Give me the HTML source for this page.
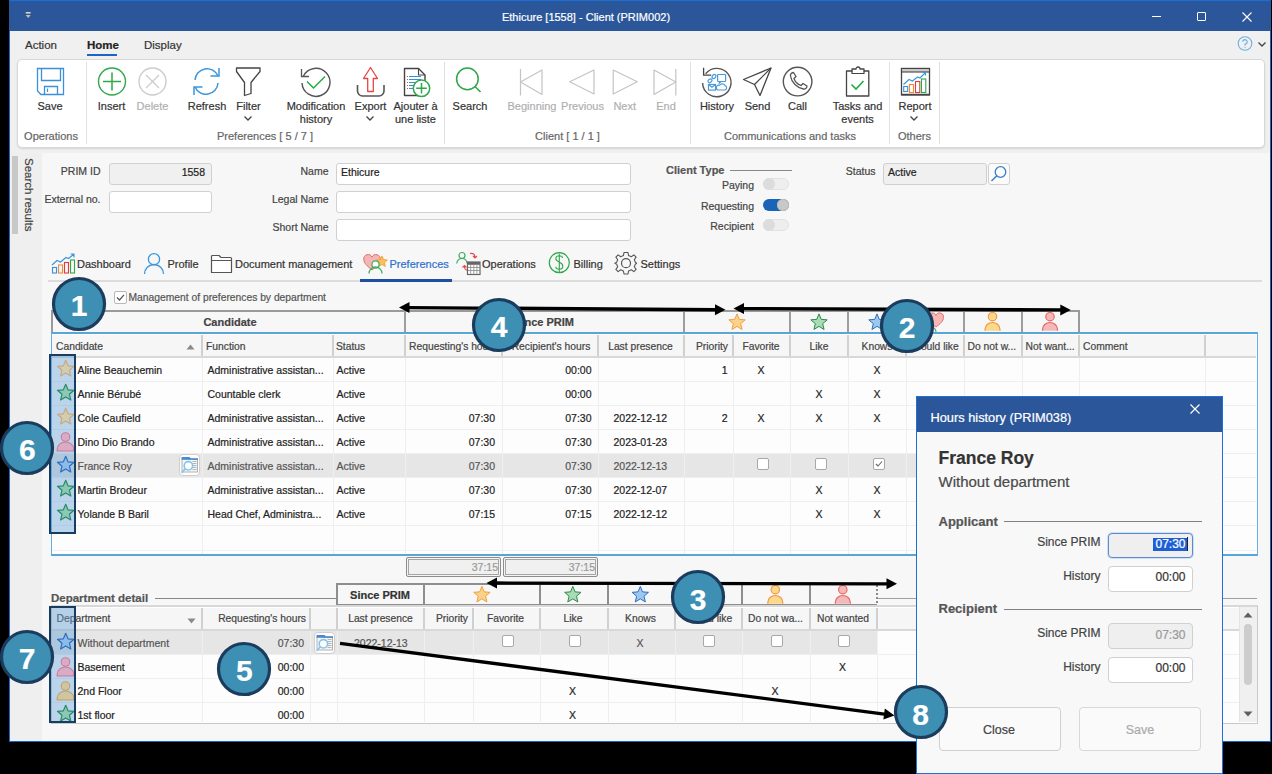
<!DOCTYPE html>
<html><head><meta charset="utf-8"><style>
html,body{margin:0;padding:0;}
body{width:1272px;height:774px;position:relative;overflow:hidden;background:#000;font-family:"Liberation Sans",sans-serif;}
.t{position:absolute;white-space:nowrap;-webkit-text-stroke:0.2px currentColor;}
svg{overflow:visible}
</style></head><body>
<div style="position:absolute;left:9px;top:0px;width:1262px;height:742px;background:#f7f7f7;border-left:1px solid #1e64c8;border-right:1px solid #1e64c8;border-bottom:1px solid #1e64c8;box-sizing:border-box;"></div>
<div style="position:absolute;left:9px;top:0px;width:1262px;height:31px;background:#2b579a;border-top:1px solid #1a6fd6;box-sizing:border-box;"></div>
<div class="t " style="left:436.0px;width:300px;text-align:center;top:10.0px;font-size:11px;line-height:14px;color:#fff;font-weight:normal;">Ethicure [1558] - Client (PRIM002)</div>
<div style="position:absolute;left:10px;top:31px;width:1260px;height:122px;background:#f0f0f0;"></div>
<div class="t " style="left:25px;top:38.0px;font-size:11.5px;line-height:14px;color:#333;font-weight:normal;">Action</div>
<div class="t " style="left:87px;top:38.0px;font-size:11.5px;line-height:14px;color:#222;font-weight:bold;">Home</div>
<div style="position:absolute;left:87px;top:54px;width:30px;height:2px;background:#1e64c8;"></div>
<div class="t " style="left:144px;top:38.0px;font-size:11.5px;line-height:14px;color:#333;font-weight:normal;">Display</div>
<div style="position:absolute;left:17px;top:59px;width:1248px;height:89px;background:#fff;border:1px solid #d8d8d8;border-radius:5px;box-sizing:border-box;box-shadow:0 1px 2px rgba(0,0,0,0.12);"></div>
<div style="position:absolute;left:10px;top:153px;width:1260px;height:588px;background:#f7f7f7;"></div>
<div style="position:absolute;left:10px;top:153px;width:32px;height:588px;background:#efefef;"></div>
<div style="position:absolute;left:12px;top:156px;width:6px;height:78px;background:#c8c8c8;"></div>
<div class="t" style="left:21.5px;top:158px;width:16px;height:80px;"><div style="position:absolute;left:0;top:0;transform-origin:0 0;transform:translate(15px,0) rotate(90deg);font-size:11.5px;line-height:16px;color:#444;">Search results</div></div>
<div style="position:absolute;left:86px;top:62px;width:1px;height:82px;background:#e0e0e0;"></div>
<div style="position:absolute;left:444px;top:62px;width:1px;height:82px;background:#e0e0e0;"></div>
<div style="position:absolute;left:690px;top:62px;width:1px;height:82px;background:#e0e0e0;"></div>
<div style="position:absolute;left:889px;top:62px;width:1px;height:82px;background:#e0e0e0;"></div>
<div style="position:absolute;left:939px;top:62px;width:1px;height:82px;background:#e0e0e0;"></div>
<svg style="position:absolute;left:37px;top:68px;" width="28" height="28" viewBox="0 0 28 28"><path d="M0.5 0.5 H26.5 V26.5 H4 L0.5 23 Z" fill="none" stroke="#3d8fd6" stroke-width="1.3"/><path d="M4.5 0.5 V12.5 H23.5 V0.5" fill="none" stroke="#3d8fd6" stroke-width="1.3"/><path d="M7.5 26.5 V18.5 H20.5 V26.5" fill="none" stroke="#3d8fd6" stroke-width="1.3"/><path d="M10.5 20.5 V24" stroke="#3d8fd6" stroke-width="1.2"/></svg>
<div class="t " style="left:5.0px;width:90px;text-align:center;top:99.3px;font-size:11px;line-height:14px;color:#333;font-weight:normal;">Save</div>
<div class="t " style="left:6.0px;width:90px;text-align:center;top:129.0px;font-size:11px;line-height:14px;color:#666;font-weight:normal;">Operations</div>
<svg style="position:absolute;left:97px;top:67px;" width="30" height="30" viewBox="0 0 30 30"><circle cx="15" cy="14.5" r="13.5" fill="none" stroke="#2ea84a" stroke-width="1.4"/><path d="M15 5.5 V23.5 M6 14.5 H24" stroke="#2ea84a" stroke-width="1.5"/></svg>
<div class="t " style="left:66.5px;width:90px;text-align:center;top:99.3px;font-size:11px;line-height:14px;color:#333;font-weight:normal;">Insert</div>
<svg style="position:absolute;left:138px;top:67px;" width="30" height="30" viewBox="0 0 30 30"><circle cx="14.5" cy="14.5" r="13.5" fill="none" stroke="#cccccc" stroke-width="1.4"/><path d="M8 8 L21 21 M21 8 L8 21" stroke="#cccccc" stroke-width="1.3"/></svg>
<div class="t " style="left:107.5px;width:90px;text-align:center;top:99.3px;font-size:11px;line-height:14px;color:#b0b0b0;font-weight:normal;">Delete</div>
<svg style="position:absolute;left:192px;top:67px;" width="30" height="30" viewBox="0 0 30 30"><path d="M3 13 A12 12 0 0 1 26 9" fill="none" stroke="#3a96dd" stroke-width="1.5"/><path d="M27 1 V9 H18.5" fill="none" stroke="#3a96dd" stroke-width="1.5"/><path d="M26 16 A12 12 0 0 1 3 20" fill="none" stroke="#3a96dd" stroke-width="1.5"/><path d="M2 28 V20 H10.5" fill="none" stroke="#3a96dd" stroke-width="1.5"/></svg>
<div class="t " style="left:162.0px;width:90px;text-align:center;top:99.3px;font-size:11px;line-height:14px;color:#333;font-weight:normal;">Refresh</div>
<svg style="position:absolute;left:235px;top:67px;" width="28" height="30" viewBox="0 0 28 30"><path d="M1.5 1 H25 V4.5 L16 15.5 V26.5 L9.5 28.5 V15.5 L1.5 4.5 Z" fill="none" stroke="#444" stroke-width="1.3" stroke-linejoin="round"/></svg>
<div class="t " style="left:203.5px;width:90px;text-align:center;top:99.3px;font-size:11px;line-height:14px;color:#333;font-weight:normal;">Filter</div>
<svg style="position:absolute;left:243.5px;top:116.0px;" width="8" height="5" viewBox="0 0 8 5"><path d="M0.5 0.5 L4 4 L7.5 0.5" fill="none" stroke="#444" stroke-width="1.3"/></svg>
<svg style="position:absolute;left:300px;top:67.5px;" width="32" height="32" viewBox="0 0 32 32"><path d="M3.5 8 A14 14 0 1 1 2 15" fill="none" stroke="#555" stroke-width="1.4"/><path d="M1.5 1 V8.5 H9" fill="none" stroke="#555" stroke-width="1.3"/><path d="M7 13.5 L13.5 20 L25 8.5" fill="none" stroke="#22aa44" stroke-width="1.5"/></svg>
<div class="t " style="left:271.0px;width:90px;text-align:center;top:99.3px;font-size:11px;line-height:14px;color:#333;font-weight:normal;">Modification</div>
<div class="t " style="left:271.0px;width:90px;text-align:center;top:112.2px;font-size:11px;line-height:14px;color:#333;font-weight:normal;">history</div>
<div class="t " style="left:195.0px;width:140px;text-align:center;top:129.0px;font-size:11px;line-height:14px;color:#666;font-weight:normal;">Preferences [ 5 / 7 ]</div>
<svg style="position:absolute;left:356px;top:66px;" width="30" height="32" viewBox="0 0 30 32"><path d="M8 2.5 L15 2.5" stroke="none"/><path d="M7.5 12.5 L14.5 1.5 L21.5 12.5 H17.3 V25.5 H11.7 V12.5 Z" fill="#fff" stroke="#e84545" stroke-width="1.3" stroke-linejoin="round"/><path d="M1.5 19 V25 A5 5 0 0 0 6.5 30 H23 A5 5 0 0 0 28 25 V19" fill="none" stroke="#555" stroke-width="1.6"/></svg>
<div class="t " style="left:325.5px;width:90px;text-align:center;top:99.3px;font-size:11px;line-height:14px;color:#333;font-weight:normal;">Export</div>
<svg style="position:absolute;left:366px;top:116.0px;" width="8" height="5" viewBox="0 0 8 5"><path d="M0.5 0.5 L4 4 L7.5 0.5" fill="none" stroke="#444" stroke-width="1.3"/></svg>
<svg style="position:absolute;left:403px;top:67px;" width="34" height="32" viewBox="0 0 34 32"><path d="M1.5 1.5 H15.5 L22 8 V28.5 H1.5 Z" fill="#fff" stroke="#444" stroke-width="1.4" stroke-linejoin="round"/><path d="M15.5 1.5 V8 H22" fill="none" stroke="#444" stroke-width="1.1"/><path d="M6 9.5 H18 M6 12.5 H18 M6 15.5 H15 M6 18.5 H13 M6 21.5 H13" stroke="#3a8fd8" stroke-width="1"/><path d="M4 9.5 H5 M4 12.5 H5 M4 15.5 H5 M4 18.5 H5 M4 21.5 H5" stroke="#e04a4a" stroke-width="1"/><circle cx="18.5" cy="21.3" r="8.2" fill="#fff" stroke="#2ea84a" stroke-width="1.5"/><path d="M18.5 16 V26.6 M13.2 21.3 H23.8" stroke="#2ea84a" stroke-width="1.5"/></svg>
<div class="t " style="left:370.5px;width:90px;text-align:center;top:99.3px;font-size:11px;line-height:14px;color:#333;font-weight:normal;">Ajouter à</div>
<div class="t " style="left:370.5px;width:90px;text-align:center;top:112.2px;font-size:11px;line-height:14px;color:#333;font-weight:normal;">une liste</div>
<svg style="position:absolute;left:454px;top:66px;" width="28" height="30" viewBox="0 0 28 30"><circle cx="13.4" cy="12.9" r="10.8" fill="none" stroke="#2ea84a" stroke-width="1.5"/><path d="M21 20.5 L26.5 26" stroke="#2ea84a" stroke-width="1.6"/></svg>
<div class="t " style="left:425.0px;width:90px;text-align:center;top:99.3px;font-size:11px;line-height:14px;color:#333;font-weight:normal;">Search</div>
<svg style="position:absolute;left:518px;top:67px;" width="28" height="30" viewBox="0 0 28 30"><path d="M2.5 2 V28.5" stroke="#c4c4c4" stroke-width="1.2"/><path d="M2.5 15 L24 3 V27.5 Z" fill="none" stroke="#c4c4c4" stroke-width="1.2" stroke-linejoin="round"/></svg>
<div class="t " style="left:487.0px;width:90px;text-align:center;top:99.3px;font-size:11px;line-height:14px;color:#b0b0b0;font-weight:normal;">Beginning</div>
<svg style="position:absolute;left:567px;top:67px;" width="30" height="30" viewBox="0 0 30 30"><path d="M2.7 14.8 L27 3 V27 Z" fill="none" stroke="#c4c4c4" stroke-width="1.2" stroke-linejoin="round"/></svg>
<div class="t " style="left:537.5px;width:90px;text-align:center;top:99.3px;font-size:11px;line-height:14px;color:#b0b0b0;font-weight:normal;">Previous</div>
<svg style="position:absolute;left:611px;top:67px;" width="30" height="30" viewBox="0 0 30 30"><path d="M2.2 3 L26.3 14.8 L2.2 27 Z" fill="none" stroke="#c4c4c4" stroke-width="1.2" stroke-linejoin="round"/></svg>
<div class="t " style="left:579.7px;width:90px;text-align:center;top:99.3px;font-size:11px;line-height:14px;color:#b0b0b0;font-weight:normal;">Next</div>
<svg style="position:absolute;left:652px;top:67px;" width="28" height="30" viewBox="0 0 28 30"><path d="M23.8 2 V28.5" stroke="#c4c4c4" stroke-width="1.2"/><path d="M2 3 L23.8 15 L2 27.5 Z" fill="none" stroke="#c4c4c4" stroke-width="1.2" stroke-linejoin="round"/></svg>
<div class="t " style="left:621.0px;width:90px;text-align:center;top:99.3px;font-size:11px;line-height:14px;color:#b0b0b0;font-weight:normal;">End</div>
<div class="t " style="left:497.5px;width:140px;text-align:center;top:129.0px;font-size:11px;line-height:14px;color:#666;font-weight:normal;">Client [ 1 / 1 ]</div>
<svg style="position:absolute;left:0px;top:0px;" width="1" height="1" viewBox="0 0 1 1"><path d="M705.6 73.8 A14.2 14.2 0 1 1 702.6 83" fill="none" stroke="#555" stroke-width="1.4"/><path d="M703.6 67.8 V75.2 H711.2" fill="none" stroke="#444" stroke-width="1.3"/><g fill="none" stroke="#4a9ad8" stroke-width="1.2"><rect x="717.6" y="74.5" width="8" height="7" rx="0.8"/><path d="M719.5 81.5 L719.3 83.2 L721 81.5"/><ellipse cx="710" cy="80.8" rx="2.2" ry="1.6" transform="rotate(-40 710 80.8)"/><ellipse cx="714" cy="76.5" rx="2.2" ry="1.6" transform="rotate(-50 714 76.5)"/><rect x="708.5" y="84.5" width="7" height="5.6"/><path d="M708.5 84.5 L712 87.3 L715.5 84.5"/><path d="M718 90 H725 A2.3 2.3 0 0 0 725 85.6 A3.3 3.3 0 0 0 719.5 85.3 A2.4 2.4 0 0 0 718 90 Z"/></g></svg>
<div class="t " style="left:672.0px;width:90px;text-align:center;top:99.3px;font-size:11px;line-height:14px;color:#333;font-weight:normal;">History</div>
<svg style="position:absolute;left:742px;top:66px;" width="32" height="32" viewBox="0 0 32 32"><path d="M1.5 13.5 L29 2 L18 29.5 L12.5 18.5 Z" fill="none" stroke="#444" stroke-width="1.3" stroke-linejoin="round"/><path d="M12.5 18.5 L29 2" stroke="#444" stroke-width="1.2"/></svg>
<div class="t " style="left:712.5px;width:90px;text-align:center;top:99.3px;font-size:11px;line-height:14px;color:#333;font-weight:normal;">Send</div>
<svg style="position:absolute;left:782px;top:66px;" width="32" height="32" viewBox="0 0 32 32"><circle cx="15.6" cy="15.6" r="14.3" fill="none" stroke="#555" stroke-width="1.4"/><path d="M8.5 10 C8 8 10 6.5 11.5 6.5 L14 10.5 L12 12.5 C13 15.5 16 18.5 19 19.5 L21 17.5 L25 20 C25 21.5 23.5 23.5 21.5 23 C15 22 9.5 16.5 8.5 10 Z" fill="none" stroke="#555" stroke-width="1.3" stroke-linejoin="round"/></svg>
<div class="t " style="left:752.5px;width:90px;text-align:center;top:99.3px;font-size:11px;line-height:14px;color:#333;font-weight:normal;">Call</div>
<svg style="position:absolute;left:845px;top:65px;" width="26" height="33" viewBox="0 0 26 33"><path d="M1.5 6 H7 V4 H11 A2 2 0 0 1 15 4 H19 V6 H23.8 V31 H1.5 Z" fill="none" stroke="#444" stroke-width="1.3" stroke-linejoin="round"/><path d="M7 6 V8.5 H19 V6" fill="none" stroke="#444" stroke-width="1.2"/><path d="M6.5 19.5 L11 24 L18.5 16" fill="none" stroke="#22aa44" stroke-width="1.6"/></svg>
<div class="t " style="left:812.5px;width:90px;text-align:center;top:99.3px;font-size:11px;line-height:14px;color:#333;font-weight:normal;">Tasks and</div>
<div class="t " style="left:812.5px;width:90px;text-align:center;top:112.2px;font-size:11px;line-height:14px;color:#333;font-weight:normal;">events</div>
<div class="t " style="left:690.0px;width:200px;text-align:center;top:129.0px;font-size:11px;line-height:14px;color:#666;font-weight:normal;">Communications and tasks</div>
<svg style="position:absolute;left:900px;top:67px;" width="32" height="30" viewBox="0 0 32 30"><rect x="1.5" y="1.5" width="28" height="26.5" fill="none" stroke="#444" stroke-width="1.3"/><rect x="1.5" y="1.5" width="28" height="3.5" fill="#ccc" stroke="#444" stroke-width="1.1"/><path d="M2 27.5 H29.5" stroke="#444" stroke-width="1.5"/><rect x="3.7" y="19.5" width="4" height="5" fill="none" stroke="#3a8fd8" stroke-width="1.1"/><rect x="9.5" y="17.5" width="4" height="8" fill="none" stroke="#f08a3a" stroke-width="1.1"/><rect x="15.5" y="14.5" width="4.3" height="11" fill="none" stroke="#e03a3a" stroke-width="1.1"/><rect x="21.5" y="12" width="4.3" height="13.5" fill="none" stroke="#2ea84a" stroke-width="1.1"/><path d="M3.5 17.5 L9 12.5 L12.5 14 L17.5 10 L20 11 L25.5 5.5 M22.5 5.5 H25.5 V8.5" fill="none" stroke="#3a96dd" stroke-width="1.1"/></svg>
<div class="t " style="left:870.0px;width:90px;text-align:center;top:99.3px;font-size:11px;line-height:14px;color:#333;font-weight:normal;">Report</div>
<svg style="position:absolute;left:910px;top:116.0px;" width="8" height="5" viewBox="0 0 8 5"><path d="M0.5 0.5 L4 4 L7.5 0.5" fill="none" stroke="#444" stroke-width="1.3"/></svg>
<div class="t " style="left:874.5px;width:80px;text-align:center;top:129.0px;font-size:11px;line-height:14px;color:#666;font-weight:normal;">Others</div>
<svg style="position:absolute;left:1237px;top:36px;" width="16" height="16" viewBox="0 0 16 16"><circle cx="8" cy="7.5" r="6.8" fill="none" stroke="#6ab0e0" stroke-width="1.1"/><path d="M5.8 5.8 A2.2 2.2 0 1 1 8.3 8 L8 8.3 V9.8" fill="none" stroke="#6ab0e0" stroke-width="1.1"/><circle cx="8" cy="11.6" r="0.7" fill="#6ab0e0"/></svg>
<svg style="position:absolute;left:1258px;top:42px;" width="8" height="5" viewBox="0 0 8 5"><path d="M0.5 0.5 L4 4 L7.5 0.5" fill="none" stroke="#444" stroke-width="1.3"/></svg>
<div style="position:absolute;left:1151.5px;top:16px;width:9px;height:1.3px;background:#fff;"></div>
<div style="position:absolute;left:1197px;top:12px;width:9px;height:9px;border:1px solid #fff;box-sizing:border-box;border-radius:1px;"></div>
<svg style="position:absolute;left:1242px;top:12px;" width="10" height="10" viewBox="0 0 10 10"><path d="M0.5 0.5 L9.5 9.5 M9.5 0.5 L0.5 9.5" stroke="#fff" stroke-width="1.1"/></svg>
<svg style="position:absolute;left:0px;top:0px;" width="1" height="1" viewBox="0 0 1 1"><rect x="25.8" y="12" width="4.8" height="1.6" fill="#d8d4cc"/><path d="M25.8 15 H30.6 L28.2 18 Z" fill="#c8c0b0"/></svg>
<div class="t " style="right:1171.5px;top:165.0px;font-size:10.5px;line-height:13px;color:#444;font-weight:normal;">PRIM ID</div>
<div style="position:absolute;left:109px;top:163px;width:103px;height:22px;background:#f0f0f0;border:1px solid #d0d0d0;border-radius:3px;box-sizing:border-box;"></div>
<div class="t " style="right:1067px;top:166.3px;font-size:10.5px;line-height:13px;color:#222;font-weight:normal;">1558</div>
<div class="t " style="right:1171.5px;top:193.3px;font-size:10.5px;line-height:13px;color:#444;font-weight:normal;">External no.</div>
<div style="position:absolute;left:109px;top:191px;width:103px;height:22px;background:#fff;border:1px solid #d0d0d0;border-radius:3px;box-sizing:border-box;"></div>
<div class="t " style="right:943.5px;top:165.0px;font-size:10.5px;line-height:13px;color:#444;font-weight:normal;">Name</div>
<div style="position:absolute;left:336px;top:163px;width:295px;height:22px;background:#fff;border:1px solid #d0d0d0;border-radius:3px;box-sizing:border-box;"></div>
<div class="t " style="left:341px;top:166.1px;font-size:10.5px;line-height:13px;color:#222;font-weight:normal;">Ethicure</div>
<div class="t " style="right:943.5px;top:193.3px;font-size:10.5px;line-height:13px;color:#444;font-weight:normal;">Legal Name</div>
<div style="position:absolute;left:336px;top:191px;width:295px;height:22px;background:#fff;border:1px solid #d0d0d0;border-radius:3px;box-sizing:border-box;"></div>
<div class="t " style="right:943.5px;top:221.1px;font-size:10.5px;line-height:13px;color:#444;font-weight:normal;">Short Name</div>
<div style="position:absolute;left:336px;top:219px;width:295px;height:22px;background:#fff;border:1px solid #d0d0d0;border-radius:3px;box-sizing:border-box;"></div>
<div class="t " style="left:666px;top:163.0px;font-size:11px;line-height:14px;color:#555;font-weight:bold;">Client Type</div>
<div style="position:absolute;left:730px;top:169.5px;width:62px;height:1.3px;background:#888;"></div>
<div class="t " style="right:518px;top:178.5px;font-size:10.5px;line-height:13px;color:#444;font-weight:normal;">Paying</div>
<div style="position:absolute;left:763px;top:177.6px;width:26px;height:12px;background:#eeeeee;border:1px solid #e2e2e2;border-radius:6px;box-sizing:border-box;"></div>
<div style="position:absolute;left:763px;top:177.6px;width:12px;height:12px;background:#dcdcdc;border-radius:6px;"></div>
<div class="t " style="right:518px;top:199.5px;font-size:10.5px;line-height:13px;color:#444;font-weight:normal;">Requesting</div>
<div style="position:absolute;left:763px;top:199px;width:26px;height:12px;background:#1a64b8;border-radius:6px;"></div>
<div style="position:absolute;left:777px;top:199px;width:12px;height:12px;background:#c8c8c8;border-radius:6px;box-shadow:0 0 0 1px #bbb inset;"></div>
<div class="t " style="right:518px;top:220.0px;font-size:10.5px;line-height:13px;color:#444;font-weight:normal;">Recipient</div>
<div style="position:absolute;left:763px;top:219px;width:26px;height:12px;background:#eeeeee;border:1px solid #e2e2e2;border-radius:6px;box-sizing:border-box;"></div>
<div style="position:absolute;left:763px;top:219px;width:12px;height:12px;background:#dcdcdc;border-radius:6px;"></div>
<div class="t " style="right:396.5px;top:165.0px;font-size:10.5px;line-height:13px;color:#444;font-weight:normal;">Status</div>
<div style="position:absolute;left:883px;top:163px;width:104px;height:22px;background:#f0f0f0;border:1px solid #d0d0d0;border-radius:3px;box-sizing:border-box;"></div>
<div class="t " style="left:888px;top:166.1px;font-size:10.5px;line-height:13px;color:#222;font-weight:normal;">Active</div>
<div style="position:absolute;left:988px;top:163px;width:22px;height:22px;background:#fbfbfb;border:1px solid #d0d0d0;border-radius:3px;box-sizing:border-box;"></div>
<svg style="position:absolute;left:990px;top:165px;" width="18" height="18" viewBox="0 0 18 18"><circle cx="10.5" cy="7" r="5.3" fill="none" stroke="#3a80c8" stroke-width="1.3"/><path d="M6.8 10.8 L1.5 16" stroke="#3a80c8" stroke-width="1.5"/></svg>
<svg style="position:absolute;left:51px;top:253px;" width="26" height="22" viewBox="0 0 26 22"><rect x="1.5" y="14.5" width="4" height="5.5" fill="none" stroke="#3a8fd8" stroke-width="1.1"/><rect x="7.5" y="12" width="4" height="8" fill="none" stroke="#f08a3a" stroke-width="1.1"/><rect x="13.5" y="9.5" width="4" height="10.5" fill="none" stroke="#e03a3a" stroke-width="1.1"/><rect x="19.5" y="7" width="4" height="13" fill="none" stroke="#2ea84a" stroke-width="1.1"/><path d="M1 12 L6 7.5 L9.5 9 L15 4.5 L17.5 5.5 L23 1 M19.5 1 H23 V4.5" fill="none" stroke="#3a96dd" stroke-width="1.1"/></svg>
<div class="t " style="left:77px;top:257.2px;font-size:11px;line-height:14px;color:#333;font-weight:normal;">Dashboard</div>
<svg style="position:absolute;left:143px;top:252px;" width="22" height="23" viewBox="0 0 22 23"><circle cx="11" cy="7.2" r="5.6" fill="none" stroke="#3a96dd" stroke-width="1.3"/><path d="M1.5 22 A9.5 9.5 0 0 1 20.5 22" fill="none" stroke="#3a96dd" stroke-width="1.3"/></svg>
<div class="t " style="left:167.5px;top:257.2px;font-size:11px;line-height:14px;color:#333;font-weight:normal;">Profile</div>
<svg style="position:absolute;left:210px;top:253px;" width="24" height="21" viewBox="0 0 24 21"><path d="M1.5 19.5 V3.5 A1 1 0 0 1 2.5 2.5 H9 L11 4.5 H20.5 A1 1 0 0 1 21.5 5.5 V19.5 Z" fill="#fff" stroke="#555" stroke-width="1.2" stroke-linejoin="round"/><path d="M1.5 7.5 H21.5" stroke="#555" stroke-width="1"/></svg>
<div class="t " style="left:235px;top:257.2px;font-size:11px;line-height:14px;color:#333;font-weight:normal;">Document management</div>
<svg style="position:absolute;left:363px;top:253px;" width="26" height="21" viewBox="0 0 26 21"><path d="M9 17 C4 13 0.8 10 0.8 6.5 A4.3 4.3 0 0 1 9 4.2 A4.3 4.3 0 0 1 17.2 6.5 C17.2 10 14 13 9 17Z" fill="#f5b5b5" stroke="#e07070" stroke-width="1"/><path d="M19 3 L20.6 6.6 L24.4 7 L21.5 9.6 L22.3 13.4 L19 11.4 L15.7 13.4 L16.5 9.6 L13.6 7 L17.4 6.6Z" fill="#f8c060" stroke="#f0a030" stroke-width="0.9"/><circle cx="12.5" cy="11.5" r="3.6" fill="#fff" stroke="#3cb060" stroke-width="1.3"/><path d="M6 20.5 A6.5 6.5 0 0 1 19 20.5" fill="none" stroke="#3cb060" stroke-width="1.3"/></svg>
<div class="t " style="left:389.5px;top:257.1px;font-size:11px;line-height:14px;color:#2f6fd0;font-weight:normal;">Preferences</div>
<svg style="position:absolute;left:456px;top:251px;" width="26" height="25" viewBox="0 0 26 25"><circle cx="6" cy="4.5" r="3" fill="none" stroke="#3cb060" stroke-width="1.2"/><path d="M0.8 12.5 A5.2 5.2 0 0 1 11.2 12.5" fill="none" stroke="#3cb060" stroke-width="1.2"/><path d="M14 2.5 C17 2 19 3 19 6.5 M17 5 L19 7 L21 5" fill="none" stroke="#e04a4a" stroke-width="1.1"/><path d="M13 19 C10 19.5 8 18 8.5 15 M6.5 16.5 L8.5 14.5 L10.5 16.5" fill="none" stroke="#e04a4a" stroke-width="1.1"/><rect x="11.5" y="11" width="12.5" height="12.5" fill="#fff" stroke="#666" stroke-width="1.2"/><path d="M11.5 13.5 H24 M14.7 14 V23 M17.8 14 V23 M20.9 14 V23 M12 16.5 H24 M12 19.5 H24" stroke="#888" stroke-width="0.8"/><rect x="11.5" y="11" width="12.5" height="2.5" fill="#666"/></svg>
<div class="t " style="left:482px;top:257.1px;font-size:11px;line-height:14px;color:#333;font-weight:normal;">Operations</div>
<svg style="position:absolute;left:548px;top:252px;" width="23" height="23" viewBox="0 0 23 23"><circle cx="11.3" cy="10.7" r="10" fill="none" stroke="#2ea84a" stroke-width="1.2"/><path d="M14.5 6 C14.5 4.5 13 3.8 11.3 3.8 C9.2 3.8 7.8 5 7.8 6.8 C7.8 10.5 14.8 9.5 14.8 14 C14.8 16 13.3 17.3 11.3 17.3 C9 17.3 7.8 16.2 7.8 14.8 M11.3 1.5 V20" fill="none" stroke="#2ea84a" stroke-width="1.1"/></svg>
<div class="t " style="left:573.5px;top:257.1px;font-size:11px;line-height:14px;color:#333;font-weight:normal;">Billing</div>
<svg style="position:absolute;left:614px;top:251px;" width="24" height="24" viewBox="0 0 24 24"><path d="M10 1.5 H14 L14.6 4.6 L17.3 5.7 L19.9 3.9 L22.1 6.1 L20.3 8.7 L21.4 11.4 L22.5 12 V12.5 L21.4 13.1 L20.3 15.8 L22.1 18.4 L19.9 20.6 L17.3 18.8 L14.6 19.9 L14 23 H10 L9.4 19.9 L6.7 18.8 L4.1 20.6 L1.9 18.4 L3.7 15.8 L2.6 13.1 L1 12.5 V12 L2.6 11.4 L3.7 8.7 L1.9 6.1 L4.1 3.9 L6.7 5.7 L9.4 4.6 Z" fill="none" stroke="#555" stroke-width="1.1" stroke-linejoin="round"/><circle cx="12" cy="12.2" r="4.5" fill="none" stroke="#555" stroke-width="1.2"/></svg>
<div class="t " style="left:640.5px;top:257.1px;font-size:11px;line-height:14px;color:#333;font-weight:normal;">Settings</div>
<div style="position:absolute;left:48px;top:280px;width:1214px;height:2px;background:#dcdcdc;"></div>
<div style="position:absolute;left:360px;top:279px;width:92px;height:3px;background:#1f4fa0;"></div>
<div style="position:absolute;left:114px;top:291px;width:13px;height:13px;background:#fff;border:1px solid #b8b8b8;border-radius:2px;box-sizing:border-box;"></div>
<svg style="position:absolute;left:114px;top:291px;" width="13" height="13" viewBox="0 0 13 13"><path d="M3 6.5 L5.5 9 L10 3.8" fill="none" stroke="#555" stroke-width="1.2"/></svg>
<div class="t " style="left:128.5px;top:291.1px;font-size:10.3px;line-height:13px;color:#555;font-weight:normal;">Management of preferences by department</div>
<div style="position:absolute;left:51px;top:310px;width:1029px;height:23px;border-top:2px solid #9a9a9a;border-left:2px solid #9a9a9a;border-right:2px solid #9a9a9a;box-sizing:border-box;"></div>
<div style="position:absolute;left:404px;top:311px;width:2px;height:22px;background:#9e9e9e;"></div>
<div style="position:absolute;left:683px;top:311px;width:2px;height:22px;background:#9e9e9e;"></div>
<div style="position:absolute;left:789px;top:311px;width:2px;height:22px;background:#9e9e9e;"></div>
<div style="position:absolute;left:847px;top:311px;width:2px;height:22px;background:#9e9e9e;"></div>
<div style="position:absolute;left:905px;top:311px;width:2px;height:22px;background:#9e9e9e;"></div>
<div style="position:absolute;left:963px;top:311px;width:2px;height:22px;background:#9e9e9e;"></div>
<div style="position:absolute;left:1021px;top:311px;width:2px;height:22px;background:#9e9e9e;"></div>
<div class="t " style="left:130.0px;width:200px;text-align:center;top:315.4px;font-size:11px;line-height:14px;color:#444;font-weight:bold;">Candidate</div>
<div class="t " style="left:444.0px;width:200px;text-align:center;top:315.4px;font-size:11px;line-height:14px;color:#444;font-weight:bold;">Since PRIM</div>
<svg style="position:absolute;left:0px;top:0px;" width="1" height="1" viewBox="0 0 1 1"><polygon points="737.00,313.90 739.27,319.37 745.18,319.84 740.68,323.70 742.05,329.46 737.00,326.37 731.95,329.46 733.32,323.70 728.82,319.84 734.73,319.37" fill="#fbd28a" stroke="#f0a040" stroke-width="1" stroke-linejoin="round"/><polygon points="819.00,313.90 821.27,319.37 827.18,319.84 822.68,323.70 824.05,329.46 819.00,326.37 813.95,329.46 815.32,323.70 810.82,319.84 816.73,319.37" fill="#a8dcb4" stroke="#2e8a4a" stroke-width="1" stroke-linejoin="round"/><polygon points="877.00,313.90 879.27,319.37 885.18,319.84 880.68,323.70 882.05,329.46 877.00,326.37 871.95,329.46 873.32,323.70 868.82,319.84 874.73,319.37" fill="#9cc8f0" stroke="#2f6ec0" stroke-width="1" stroke-linejoin="round"/><path d="M936 327 C932 324 928.5 321 928.5 317.5 A3.9 3.9 0 0 1 936 315.5 A3.9 3.9 0 0 1 943.5 317.5 C943.5 321 940 324 936 327 Z" fill="#f7b8b8" stroke="#e87070" stroke-width="1"/><circle cx="931" cy="325" r="2.6" fill="#fff" stroke="#3cb060" stroke-width="1.1"/><path d="M926 332 A5 5 0 0 1 936 332" fill="none" stroke="#3cb060" stroke-width="1.1"/><circle cx="992.5" cy="316.7" r="4.2" fill="#fbd88a" stroke="#f09848" stroke-width="1.2"/><path d="M985.0 330.8 V329.5 A7.5 7 0 0 1 1000.0 329.5 V330.8" fill="#fbd88a" stroke="#f09848" stroke-width="1.2"/><circle cx="1050" cy="316.7" r="4.2" fill="#f5b8b8" stroke="#e86868" stroke-width="1.2"/><path d="M1042.5 330.8 V329.5 A7.5 7 0 0 1 1057.5 329.5 V330.8" fill="#f5b8b8" stroke="#e86868" stroke-width="1.2"/></svg>
<div style="position:absolute;left:51px;top:332px;width:1207px;height:224px;background:#fdfdfd;border:1px solid #6aaee0;border-top:2px solid #5aa5d8;border-bottom:2px solid #5aa5d8;box-sizing:border-box;"></div>
<div style="position:absolute;left:52px;top:334px;width:1204px;height:22px;background:#f6f6f6;box-shadow:inset 0 1px 0 #fff;"></div>
<div style="position:absolute;left:52px;top:356px;width:1204px;height:2px;background:#d8d8d8;"></div>
<div style="position:absolute;left:201px;top:335px;width:2px;height:21px;background:#d0d0d0;"></div>
<div style="position:absolute;left:332px;top:335px;width:2px;height:21px;background:#d0d0d0;"></div>
<div style="position:absolute;left:404px;top:335px;width:2px;height:21px;background:#d0d0d0;"></div>
<div style="position:absolute;left:501px;top:335px;width:2px;height:21px;background:#d0d0d0;"></div>
<div style="position:absolute;left:597px;top:335px;width:2px;height:21px;background:#d0d0d0;"></div>
<div style="position:absolute;left:683px;top:335px;width:2px;height:21px;background:#d0d0d0;"></div>
<div style="position:absolute;left:732px;top:335px;width:2px;height:21px;background:#d0d0d0;"></div>
<div style="position:absolute;left:789px;top:335px;width:2px;height:21px;background:#d0d0d0;"></div>
<div style="position:absolute;left:847px;top:335px;width:2px;height:21px;background:#d0d0d0;"></div>
<div style="position:absolute;left:905px;top:335px;width:2px;height:21px;background:#d0d0d0;"></div>
<div style="position:absolute;left:963px;top:335px;width:2px;height:21px;background:#d0d0d0;"></div>
<div style="position:absolute;left:1021px;top:335px;width:2px;height:21px;background:#d0d0d0;"></div>
<div style="position:absolute;left:1078px;top:335px;width:2px;height:21px;background:#d0d0d0;"></div>
<div style="position:absolute;left:1204px;top:335px;width:2px;height:21px;background:#d0d0d0;"></div>
<div style="position:absolute;left:52px;top:454px;width:1153px;height:23px;background:#e6e6e6;"></div>
<div style="position:absolute;left:52px;top:381px;width:1204px;height:1px;background:#efefef;"></div>
<div style="position:absolute;left:52px;top:405px;width:1204px;height:1px;background:#efefef;"></div>
<div style="position:absolute;left:52px;top:429px;width:1204px;height:1px;background:#efefef;"></div>
<div style="position:absolute;left:52px;top:453px;width:1204px;height:1px;background:#efefef;"></div>
<div style="position:absolute;left:52px;top:477px;width:1204px;height:1px;background:#efefef;"></div>
<div style="position:absolute;left:52px;top:501px;width:1204px;height:1px;background:#efefef;"></div>
<div style="position:absolute;left:52px;top:525px;width:1204px;height:1px;background:#efefef;"></div>
<div style="position:absolute;left:52px;top:550px;width:1204px;height:1px;background:#f2f2f2;"></div>
<div style="position:absolute;left:202px;top:358px;width:1px;height:196px;background:#efefef;"></div>
<div style="position:absolute;left:333px;top:358px;width:1px;height:196px;background:#efefef;"></div>
<div style="position:absolute;left:405px;top:358px;width:1px;height:196px;background:#efefef;"></div>
<div style="position:absolute;left:502px;top:358px;width:1px;height:196px;background:#efefef;"></div>
<div style="position:absolute;left:598px;top:358px;width:1px;height:196px;background:#efefef;"></div>
<div style="position:absolute;left:684px;top:358px;width:1px;height:196px;background:#efefef;"></div>
<div style="position:absolute;left:733px;top:358px;width:1px;height:196px;background:#efefef;"></div>
<div style="position:absolute;left:790px;top:358px;width:1px;height:196px;background:#efefef;"></div>
<div style="position:absolute;left:848px;top:358px;width:1px;height:196px;background:#efefef;"></div>
<div style="position:absolute;left:906px;top:358px;width:1px;height:196px;background:#efefef;"></div>
<div style="position:absolute;left:964px;top:358px;width:1px;height:196px;background:#efefef;"></div>
<div style="position:absolute;left:1022px;top:358px;width:1px;height:196px;background:#efefef;"></div>
<div style="position:absolute;left:1079px;top:358px;width:1px;height:196px;background:#efefef;"></div>
<div style="position:absolute;left:1205px;top:358px;width:1px;height:196px;background:#efefef;"></div>
<div class="t " style="left:56px;top:339.5px;font-size:10.3px;line-height:13px;color:#444;font-weight:normal;">Candidate</div>
<svg style="position:absolute;left:186px;top:343.5px;" width="9" height="6" viewBox="0 0 9 6"><path d="M0.5 5.5 L4.5 0.5 L8.5 5.5Z" fill="#8a8a8a"/></svg>
<div class="t " style="left:206px;top:339.5px;font-size:10.3px;line-height:13px;color:#444;font-weight:normal;">Function</div>
<div class="t " style="left:336px;top:339.5px;font-size:10.3px;line-height:13px;color:#444;font-weight:normal;">Status</div>
<div class="t " style="left:405.0px;width:96px;text-align:center;top:339.5px;font-size:10.3px;line-height:13px;color:#444;font-weight:normal;">Requesting's hours</div>
<div class="t " style="left:503.0px;width:96px;text-align:center;top:339.5px;font-size:10.3px;line-height:13px;color:#444;font-weight:normal;">Recipient's hours</div>
<div class="t " style="left:597.5px;width:86px;text-align:center;top:339.5px;font-size:10.3px;line-height:13px;color:#444;font-weight:normal;">Last presence</div>
<div class="t " style="right:544px;top:339.5px;font-size:10.3px;line-height:13px;color:#444;font-weight:normal;">Priority</div>
<div class="t " style="left:731.0px;width:60px;text-align:center;top:339.5px;font-size:10.3px;line-height:13px;color:#444;font-weight:normal;">Favorite</div>
<div class="t " style="left:789.0px;width:60px;text-align:center;top:339.5px;font-size:10.3px;line-height:13px;color:#444;font-weight:normal;">Like</div>
<div class="t " style="left:847.0px;width:60px;text-align:center;top:339.5px;font-size:10.3px;line-height:13px;color:#444;font-weight:normal;">Knows</div>
<div class="t " style="left:905.0px;width:60px;text-align:center;top:339.5px;font-size:10.3px;line-height:13px;color:#444;font-weight:normal;">Would like</div>
<div class="t " style="left:967.5px;top:339.5px;font-size:10.3px;line-height:13px;color:#444;font-weight:normal;">Do not w...</div>
<div class="t " style="left:1025.5px;top:339.5px;font-size:10.3px;line-height:13px;color:#444;font-weight:normal;">Not want...</div>
<div class="t " style="left:1083px;top:339.5px;font-size:10.3px;line-height:13px;color:#444;font-weight:normal;">Comment</div>
<div class="t " style="left:77.5px;top:363.5px;font-size:10.5px;line-height:13px;color:#222;font-weight:normal;">Aline Beauchemin</div>
<div class="t " style="left:207.5px;top:363.5px;font-size:10.5px;line-height:13px;color:#222;font-weight:normal;">Administrative assistan...</div>
<div class="t " style="left:336.5px;top:363.5px;font-size:10.5px;line-height:13px;color:#222;font-weight:normal;">Active</div>
<div class="t " style="right:680.5px;top:363.5px;font-size:10.5px;line-height:13px;color:#222;font-weight:normal;">00:00</div>
<div class="t " style="right:544.5px;top:363.5px;font-size:10.5px;line-height:13px;color:#222;font-weight:normal;">1</div>
<div class="t " style="left:751.0px;width:20px;text-align:center;top:363.5px;font-size:10.5px;line-height:13px;color:#222;font-weight:normal;">X</div>
<div class="t " style="left:867.0px;width:20px;text-align:center;top:363.5px;font-size:10.5px;line-height:13px;color:#222;font-weight:normal;">X</div>
<div class="t " style="left:77.5px;top:387.5px;font-size:10.5px;line-height:13px;color:#222;font-weight:normal;">Annie Bérubé</div>
<div class="t " style="left:207.5px;top:387.5px;font-size:10.5px;line-height:13px;color:#222;font-weight:normal;">Countable clerk</div>
<div class="t " style="left:336.5px;top:387.5px;font-size:10.5px;line-height:13px;color:#222;font-weight:normal;">Active</div>
<div class="t " style="right:680.5px;top:387.5px;font-size:10.5px;line-height:13px;color:#222;font-weight:normal;">00:00</div>
<div class="t " style="left:809.0px;width:20px;text-align:center;top:387.5px;font-size:10.5px;line-height:13px;color:#222;font-weight:normal;">X</div>
<div class="t " style="left:867.0px;width:20px;text-align:center;top:387.5px;font-size:10.5px;line-height:13px;color:#222;font-weight:normal;">X</div>
<div class="t " style="left:77.5px;top:411.5px;font-size:10.5px;line-height:13px;color:#222;font-weight:normal;">Cole Caufield</div>
<div class="t " style="left:207.5px;top:411.5px;font-size:10.5px;line-height:13px;color:#222;font-weight:normal;">Administrative assistan...</div>
<div class="t " style="left:336.5px;top:411.5px;font-size:10.5px;line-height:13px;color:#222;font-weight:normal;">Active</div>
<div class="t " style="right:777px;top:411.5px;font-size:10.5px;line-height:13px;color:#222;font-weight:normal;">07:30</div>
<div class="t " style="right:680.5px;top:411.5px;font-size:10.5px;line-height:13px;color:#222;font-weight:normal;">07:30</div>
<div class="t " style="left:613.5px;top:411.5px;font-size:10.5px;line-height:13px;color:#222;font-weight:normal;">2022-12-12</div>
<div class="t " style="right:544.5px;top:411.5px;font-size:10.5px;line-height:13px;color:#222;font-weight:normal;">2</div>
<div class="t " style="left:751.0px;width:20px;text-align:center;top:411.5px;font-size:10.5px;line-height:13px;color:#222;font-weight:normal;">X</div>
<div class="t " style="left:809.0px;width:20px;text-align:center;top:411.5px;font-size:10.5px;line-height:13px;color:#222;font-weight:normal;">X</div>
<div class="t " style="left:867.0px;width:20px;text-align:center;top:411.5px;font-size:10.5px;line-height:13px;color:#222;font-weight:normal;">X</div>
<div class="t " style="left:77.5px;top:435.5px;font-size:10.5px;line-height:13px;color:#222;font-weight:normal;">Dino Dio Brando</div>
<div class="t " style="left:207.5px;top:435.5px;font-size:10.5px;line-height:13px;color:#222;font-weight:normal;">Administrative assistan...</div>
<div class="t " style="left:336.5px;top:435.5px;font-size:10.5px;line-height:13px;color:#222;font-weight:normal;">Active</div>
<div class="t " style="right:777px;top:435.5px;font-size:10.5px;line-height:13px;color:#222;font-weight:normal;">07:30</div>
<div class="t " style="right:680.5px;top:435.5px;font-size:10.5px;line-height:13px;color:#222;font-weight:normal;">07:30</div>
<div class="t " style="left:613.5px;top:435.5px;font-size:10.5px;line-height:13px;color:#222;font-weight:normal;">2023-01-23</div>
<div class="t " style="left:77.5px;top:459.5px;font-size:10.5px;line-height:13px;color:#555;font-weight:normal;">France Roy</div>
<div class="t " style="left:207.5px;top:459.5px;font-size:10.5px;line-height:13px;color:#555;font-weight:normal;">Administrative assistan...</div>
<div class="t " style="left:336.5px;top:459.5px;font-size:10.5px;line-height:13px;color:#555;font-weight:normal;">Active</div>
<div class="t " style="right:777px;top:459.5px;font-size:10.5px;line-height:13px;color:#555;font-weight:normal;">07:30</div>
<div class="t " style="right:680.5px;top:459.5px;font-size:10.5px;line-height:13px;color:#555;font-weight:normal;">07:30</div>
<div class="t " style="left:613.5px;top:459.5px;font-size:10.5px;line-height:13px;color:#555;font-weight:normal;">2022-12-13</div>
<div style="position:absolute;left:756.5px;top:458px;width:12px;height:12px;background:#fff;border:1px solid #a8a8a8;border-radius:2px;box-sizing:border-box;"></div>
<div style="position:absolute;left:814.5px;top:458px;width:12px;height:12px;background:#fff;border:1px solid #a8a8a8;border-radius:2px;box-sizing:border-box;"></div>
<div style="position:absolute;left:872.5px;top:458px;width:12px;height:12px;background:#fff;border:1px solid #a8a8a8;border-radius:2px;box-sizing:border-box;"></div>
<svg style="position:absolute;left:872.5px;top:458px;" width="12" height="12" viewBox="0 0 12 12"><path d="M3 6 L5 8 L9 3.5" fill="none" stroke="#666" stroke-width="1.1"/></svg>
<div class="t " style="left:77.5px;top:483.5px;font-size:10.5px;line-height:13px;color:#222;font-weight:normal;">Martin Brodeur</div>
<div class="t " style="left:207.5px;top:483.5px;font-size:10.5px;line-height:13px;color:#222;font-weight:normal;">Administrative assistan...</div>
<div class="t " style="left:336.5px;top:483.5px;font-size:10.5px;line-height:13px;color:#222;font-weight:normal;">Active</div>
<div class="t " style="right:777px;top:483.5px;font-size:10.5px;line-height:13px;color:#222;font-weight:normal;">07:30</div>
<div class="t " style="right:680.5px;top:483.5px;font-size:10.5px;line-height:13px;color:#222;font-weight:normal;">07:30</div>
<div class="t " style="left:613.5px;top:483.5px;font-size:10.5px;line-height:13px;color:#222;font-weight:normal;">2022-12-07</div>
<div class="t " style="left:809.0px;width:20px;text-align:center;top:483.5px;font-size:10.5px;line-height:13px;color:#222;font-weight:normal;">X</div>
<div class="t " style="left:867.0px;width:20px;text-align:center;top:483.5px;font-size:10.5px;line-height:13px;color:#222;font-weight:normal;">X</div>
<div class="t " style="left:77.5px;top:507.5px;font-size:10.5px;line-height:13px;color:#222;font-weight:normal;">Yolande B Baril</div>
<div class="t " style="left:207.5px;top:507.5px;font-size:10.5px;line-height:13px;color:#222;font-weight:normal;">Head Chef, Administra...</div>
<div class="t " style="left:336.5px;top:507.5px;font-size:10.5px;line-height:13px;color:#222;font-weight:normal;">Active</div>
<div class="t " style="right:777px;top:507.5px;font-size:10.5px;line-height:13px;color:#222;font-weight:normal;">07:15</div>
<div class="t " style="right:680.5px;top:507.5px;font-size:10.5px;line-height:13px;color:#222;font-weight:normal;">07:15</div>
<div class="t " style="left:613.5px;top:507.5px;font-size:10.5px;line-height:13px;color:#222;font-weight:normal;">2022-12-12</div>
<div class="t " style="left:809.0px;width:20px;text-align:center;top:507.5px;font-size:10.5px;line-height:13px;color:#222;font-weight:normal;">X</div>
<div class="t " style="left:867.0px;width:20px;text-align:center;top:507.5px;font-size:10.5px;line-height:13px;color:#222;font-weight:normal;">X</div>
<div style="position:absolute;left:178.5px;top:454.3px;width:21px;height:22px;background:#fff;border:1px solid #cfcfcf;border-radius:4px;box-sizing:border-box;"></div>
<svg style="position:absolute;left:178.5px;top:454.3px;" width="21" height="22" viewBox="0 0 21 22"><rect x="3" y="4.5" width="15.5" height="13.5" fill="#f6f6f6" stroke="#a8a8a8" stroke-width="0.9"/><path d="M2.6 5.8 V3 H10.5 L12 4.6 H18.9 V6 Z" fill="#4a88d0"/><path d="M13.5 7.5 H17.5 M13.5 9.5 H17.5 M13.5 11.5 H17.5 M13.5 13.5 H17.5 M13.5 15.5 H17.5" stroke="#999" stroke-width="0.7"/><circle cx="9.4" cy="11.8" r="4.2" fill="#fff" stroke="#86c4ee" stroke-width="1.6"/><path d="M6.3 14.9 L2.6 18.8" stroke="#86c4ee" stroke-width="1.6"/></svg>
<div style="position:absolute;left:405.5px;top:556.5px;width:95.5px;height:20.5px;background:#f0f0f0;border:1px solid #8c8c8c;box-shadow:inset 0 0 0 1px #f4f4f4, inset 0 0 0 2px #a4a4a4;box-sizing:border-box;border-radius:2px;"></div>
<div style="position:absolute;left:502.5px;top:556.5px;width:95.5px;height:20.5px;background:#f0f0f0;border:1px solid #8c8c8c;box-shadow:inset 0 0 0 1px #f4f4f4, inset 0 0 0 2px #a4a4a4;box-sizing:border-box;border-radius:2px;"></div>
<div class="t " style="right:774px;top:560.5px;font-size:10.5px;line-height:13px;color:#999;font-weight:normal;">37:15</div>
<div class="t " style="right:677px;top:560.5px;font-size:10.5px;line-height:13px;color:#999;font-weight:normal;">37:15</div>
<div class="t " style="left:51px;top:591.2px;font-size:11.5px;line-height:14px;color:#555;font-weight:bold;">Department detail</div>
<div style="position:absolute;left:155px;top:597.5px;width:182px;height:1.3px;background:#888;"></div>
<div style="position:absolute;left:877px;top:597.5px;width:380px;height:1px;background:#a0a0a0;"></div>
<div style="position:absolute;left:336px;top:583px;width:541px;height:23px;border-top:2px solid #8e8e8e;border-left:2px solid #8e8e8e;border-bottom:2px solid #8e8e8e;box-sizing:border-box;"></div>
<div style="position:absolute;left:423px;top:584px;width:2px;height:21px;background:#8e8e8e;"></div>
<div style="position:absolute;left:539px;top:584px;width:2px;height:21px;background:#8e8e8e;"></div>
<div style="position:absolute;left:607px;top:584px;width:2px;height:21px;background:#8e8e8e;"></div>
<div style="position:absolute;left:674px;top:584px;width:2px;height:21px;background:#8e8e8e;"></div>
<div style="position:absolute;left:741px;top:584px;width:2px;height:21px;background:#8e8e8e;"></div>
<div style="position:absolute;left:809px;top:584px;width:2px;height:21px;background:#8e8e8e;"></div>
<div style="position:absolute;left:876px;top:585px;width:1.5px;height:2px;background:#8a8a8a;"></div>
<div style="position:absolute;left:876px;top:589px;width:1.5px;height:2px;background:#8a8a8a;"></div>
<div style="position:absolute;left:876px;top:593px;width:1.5px;height:2px;background:#8a8a8a;"></div>
<div style="position:absolute;left:876px;top:597px;width:1.5px;height:2px;background:#8a8a8a;"></div>
<div style="position:absolute;left:876px;top:601px;width:1.5px;height:2px;background:#8a8a8a;"></div>
<div class="t " style="left:335.0px;width:90px;text-align:center;top:587.7px;font-size:11px;line-height:14px;color:#333;font-weight:bold;">Since PRIM</div>
<svg style="position:absolute;left:0px;top:0px;" width="1" height="1" viewBox="0 0 1 1"><polygon points="481.90,586.40 484.17,591.87 490.08,592.34 485.58,596.20 486.95,601.96 481.90,598.87 476.85,601.96 478.22,596.20 473.72,592.34 479.63,591.87" fill="#fbd28a" stroke="#f0a040" stroke-width="1" stroke-linejoin="round"/><polygon points="572.80,586.40 575.07,591.87 580.98,592.34 576.48,596.20 577.85,601.96 572.80,598.87 567.75,601.96 569.12,596.20 564.62,592.34 570.53,591.87" fill="#a8dcb4" stroke="#2e8a4a" stroke-width="1" stroke-linejoin="round"/><polygon points="640.30,586.40 642.57,591.87 648.48,592.34 643.98,596.20 645.35,601.96 640.30,598.87 635.25,601.96 636.62,596.20 632.12,592.34 638.03,591.87" fill="#9cc8f0" stroke="#2f6ec0" stroke-width="1" stroke-linejoin="round"/><path d="M708.5 601 C704.5 598 701.0 595 701.0 591.5 A3.9 3.9 0 0 1 708.5 589.5 A3.9 3.9 0 0 1 716.0 591.5 C716.0 595 712.5 598 708.5 601 Z" fill="#f7b8b8" stroke="#e87070" stroke-width="1"/><circle cx="775.3" cy="589.7" r="4.2" fill="#fbd88a" stroke="#f09848" stroke-width="1.2"/><path d="M767.8 603.8 V602.5 A7.5 7 0 0 1 782.8 602.5 V603.8" fill="#fbd88a" stroke="#f09848" stroke-width="1.2"/><circle cx="842.8" cy="589.7" r="4.2" fill="#f5b8b8" stroke="#e86868" stroke-width="1.2"/><path d="M835.3 603.8 V602.5 A7.5 7 0 0 1 850.3 602.5 V603.8" fill="#f5b8b8" stroke="#e86868" stroke-width="1.2"/></svg>
<div style="position:absolute;left:51px;top:605px;width:1207px;height:119px;background:#fdfdfd;border:1px solid #c8c8c8;border-top:2px solid #d8d8d8;box-sizing:border-box;"></div>
<div style="position:absolute;left:52px;top:607px;width:1187px;height:22px;background:#f6f6f6;box-shadow:inset 0 1px 0 #fff;"></div>
<div style="position:absolute;left:52px;top:629px;width:1187px;height:2px;background:#d8d8d8;"></div>
<div style="position:absolute;left:201px;top:608px;width:2px;height:21px;background:#d0d0d0;"></div>
<div style="position:absolute;left:309px;top:608px;width:2px;height:21px;background:#d0d0d0;"></div>
<div style="position:absolute;left:336px;top:608px;width:2px;height:21px;background:#d0d0d0;"></div>
<div style="position:absolute;left:423px;top:608px;width:2px;height:21px;background:#d0d0d0;"></div>
<div style="position:absolute;left:472px;top:608px;width:2px;height:21px;background:#d0d0d0;"></div>
<div style="position:absolute;left:539px;top:608px;width:2px;height:21px;background:#d0d0d0;"></div>
<div style="position:absolute;left:607px;top:608px;width:2px;height:21px;background:#d0d0d0;"></div>
<div style="position:absolute;left:674px;top:608px;width:2px;height:21px;background:#d0d0d0;"></div>
<div style="position:absolute;left:741px;top:608px;width:2px;height:21px;background:#d0d0d0;"></div>
<div style="position:absolute;left:809px;top:608px;width:2px;height:21px;background:#d0d0d0;"></div>
<div style="position:absolute;left:876px;top:608px;width:2px;height:21px;background:#d0d0d0;"></div>
<div style="position:absolute;left:52px;top:631px;width:825px;height:23px;background:#e6e6e6;"></div>
<div style="position:absolute;left:52px;top:654px;width:1187px;height:1px;background:#efefef;"></div>
<div style="position:absolute;left:52px;top:678px;width:1187px;height:1px;background:#efefef;"></div>
<div style="position:absolute;left:52px;top:702px;width:1187px;height:1px;background:#efefef;"></div>
<div style="position:absolute;left:202px;top:631px;width:1px;height:91px;background:#efefef;"></div>
<div style="position:absolute;left:310px;top:631px;width:1px;height:91px;background:#efefef;"></div>
<div style="position:absolute;left:337px;top:631px;width:1px;height:91px;background:#efefef;"></div>
<div style="position:absolute;left:424px;top:631px;width:1px;height:91px;background:#efefef;"></div>
<div style="position:absolute;left:473px;top:631px;width:1px;height:91px;background:#efefef;"></div>
<div style="position:absolute;left:540px;top:631px;width:1px;height:91px;background:#efefef;"></div>
<div style="position:absolute;left:608px;top:631px;width:1px;height:91px;background:#efefef;"></div>
<div style="position:absolute;left:675px;top:631px;width:1px;height:91px;background:#efefef;"></div>
<div style="position:absolute;left:742px;top:631px;width:1px;height:91px;background:#efefef;"></div>
<div style="position:absolute;left:810px;top:631px;width:1px;height:91px;background:#efefef;"></div>
<div style="position:absolute;left:877px;top:631px;width:1px;height:91px;background:#efefef;"></div>
<div class="t " style="left:56.6px;top:612.3px;font-size:10.3px;line-height:13px;color:#444;font-weight:normal;">Department</div>
<svg style="position:absolute;left:186.5px;top:617.5px;" width="9" height="6" viewBox="0 0 9 6"><path d="M0.5 0.5 L4.5 5.5 L8.5 0.5Z" fill="#8a8a8a"/></svg>
<div class="t " style="right:966px;top:612.1px;font-size:10.3px;line-height:13px;color:#444;font-weight:normal;">Requesting's hours</div>
<div class="t " style="left:337.5px;width:86px;text-align:center;top:612.3px;font-size:10.3px;line-height:13px;color:#444;font-weight:normal;">Last presence</div>
<div class="t " style="right:804px;top:612.3px;font-size:10.3px;line-height:13px;color:#444;font-weight:normal;">Priority</div>
<div class="t " style="left:472.5px;width:66px;text-align:center;top:612.3px;font-size:10.3px;line-height:13px;color:#444;font-weight:normal;">Favorite</div>
<div class="t " style="left:540.0px;width:66px;text-align:center;top:612.3px;font-size:10.3px;line-height:13px;color:#444;font-weight:normal;">Like</div>
<div class="t " style="left:607.5px;width:66px;text-align:center;top:612.3px;font-size:10.3px;line-height:13px;color:#444;font-weight:normal;">Knows</div>
<div class="t " style="left:675.5px;width:66px;text-align:center;top:612.3px;font-size:10.3px;line-height:13px;color:#444;font-weight:normal;">Would like</div>
<div class="t " style="left:742.5px;width:66px;text-align:center;top:612.3px;font-size:10.3px;line-height:13px;color:#444;font-weight:normal;">Do not wa...</div>
<div class="t " style="left:810.0px;width:66px;text-align:center;top:612.3px;font-size:10.3px;line-height:13px;color:#444;font-weight:normal;">Not wanted</div>
<div class="t " style="left:77.5px;top:636.5px;font-size:10.5px;line-height:13px;color:#555;font-weight:normal;">Without department</div>
<div class="t " style="right:968px;top:636.5px;font-size:10.5px;line-height:13px;color:#555;font-weight:normal;">07:30</div>
<div class="t " style="left:77.5px;top:660.5px;font-size:10.5px;line-height:13px;color:#222;font-weight:normal;">Basement</div>
<div class="t " style="right:968px;top:660.5px;font-size:10.5px;line-height:13px;color:#222;font-weight:normal;">00:00</div>
<div class="t " style="left:77.5px;top:684.5px;font-size:10.5px;line-height:13px;color:#222;font-weight:normal;">2nd Floor</div>
<div class="t " style="right:968px;top:684.5px;font-size:10.5px;line-height:13px;color:#222;font-weight:normal;">00:00</div>
<div class="t " style="left:77.5px;top:708.5px;font-size:10.5px;line-height:13px;color:#222;font-weight:normal;">1st floor</div>
<div class="t " style="right:968px;top:708.5px;font-size:10.5px;line-height:13px;color:#222;font-weight:normal;">00:00</div>
<div class="t " style="left:354px;top:636.5px;font-size:10.5px;line-height:13px;color:#555;font-weight:normal;">2022-12-13</div>
<div style="position:absolute;left:501.5px;top:635px;width:12px;height:12px;background:#fff;border:1px solid #a8a8a8;border-radius:2px;box-sizing:border-box;"></div>
<div style="position:absolute;left:569px;top:635px;width:12px;height:12px;background:#fff;border:1px solid #a8a8a8;border-radius:2px;box-sizing:border-box;"></div>
<div style="position:absolute;left:703px;top:635px;width:12px;height:12px;background:#fff;border:1px solid #a8a8a8;border-radius:2px;box-sizing:border-box;"></div>
<div style="position:absolute;left:770.5px;top:635px;width:12px;height:12px;background:#fff;border:1px solid #a8a8a8;border-radius:2px;box-sizing:border-box;"></div>
<div style="position:absolute;left:837.5px;top:635px;width:12px;height:12px;background:#fff;border:1px solid #a8a8a8;border-radius:2px;box-sizing:border-box;"></div>
<div class="t " style="left:630.0px;width:20px;text-align:center;top:636.5px;font-size:10.5px;line-height:13px;color:#555;font-weight:normal;">X</div>
<div class="t " style="left:832.5px;width:20px;text-align:center;top:660.5px;font-size:10.5px;line-height:13px;color:#222;font-weight:normal;">X</div>
<div class="t " style="left:562.5px;width:20px;text-align:center;top:684.5px;font-size:10.5px;line-height:13px;color:#222;font-weight:normal;">X</div>
<div class="t " style="left:765.0px;width:20px;text-align:center;top:684.5px;font-size:10.5px;line-height:13px;color:#222;font-weight:normal;">X</div>
<div class="t " style="left:562.5px;width:20px;text-align:center;top:708.5px;font-size:10.5px;line-height:13px;color:#222;font-weight:normal;">X</div>
<div style="position:absolute;left:314px;top:631.5px;width:21px;height:22px;background:#fff;border:1px solid #cfcfcf;border-radius:4px;box-sizing:border-box;"></div>
<svg style="position:absolute;left:314px;top:631.5px;" width="21" height="22" viewBox="0 0 21 22"><rect x="3" y="4.5" width="15.5" height="13.5" fill="#f6f6f6" stroke="#a8a8a8" stroke-width="0.9"/><path d="M2.6 5.8 V3 H10.5 L12 4.6 H18.9 V6 Z" fill="#4a88d0"/><path d="M13.5 7.5 H17.5 M13.5 9.5 H17.5 M13.5 11.5 H17.5 M13.5 13.5 H17.5 M13.5 15.5 H17.5" stroke="#999" stroke-width="0.7"/><circle cx="9.4" cy="11.8" r="4.2" fill="#fff" stroke="#86c4ee" stroke-width="1.6"/><path d="M6.3 14.9 L2.6 18.8" stroke="#86c4ee" stroke-width="1.6"/></svg>
<div style="position:absolute;left:1239px;top:607px;width:18px;height:115px;background:#f0f0f0;border-left:1px solid #e4e4e4;box-sizing:border-box;"></div>
<svg style="position:absolute;left:1243px;top:612px;" width="10" height="6" viewBox="0 0 10 6"><path d="M0.5 5.5 L5 0.5 L9.5 5.5Z" fill="#606060"/></svg>
<svg style="position:absolute;left:1243px;top:711px;" width="10" height="6" viewBox="0 0 10 6"><path d="M0.5 0.5 L5 5.5 L9.5 0.5Z" fill="#606060"/></svg>
<div style="position:absolute;left:1243.5px;top:623.5px;width:8.5px;height:61.5px;background:#cdcdcd;border-radius:4px;"></div>
<div style="position:absolute;left:49px;top:354px;width:27px;height:180px;background:rgba(100,160,215,0.44);"></div>
<div style="position:absolute;left:49px;top:606px;width:27px;height:117px;background:rgba(100,160,215,0.44);"></div>
<svg style="position:absolute;left:0px;top:0px;" width="1" height="1" viewBox="0 0 1 1"><polygon points="65.70,360.30 68.00,365.83 73.97,366.31 69.42,370.21 70.81,376.04 65.70,372.92 60.59,376.04 61.98,370.21 57.43,366.31 63.40,365.83" fill="#d2ceb0" stroke="#c8a888" stroke-width="1.2" stroke-linejoin="round"/><polygon points="65.70,384.30 68.00,389.83 73.97,390.31 69.42,394.21 70.81,400.04 65.70,396.92 60.59,400.04 61.98,394.21 57.43,390.31 63.40,389.83" fill="#8cc8b4" stroke="#2a8a68" stroke-width="1.2" stroke-linejoin="round"/><polygon points="65.70,408.30 68.00,413.83 73.97,414.31 69.42,418.21 70.81,424.04 65.70,420.92 60.59,424.04 61.98,418.21 57.43,414.31 63.40,413.83" fill="#d2ceb0" stroke="#c8a888" stroke-width="1.2" stroke-linejoin="round"/><circle cx="65.5" cy="437" r="4.3" fill="#d8acc4" stroke="#d07898" stroke-width="1.1"/><path d="M57.2 451 V449 A8.3 7 0 0 1 73.8 449 V451 Z" fill="#d8acc4" stroke="#d07898" stroke-width="1.1"/><polygon points="65.70,456.30 68.00,461.83 73.97,462.31 69.42,466.21 70.81,472.04 65.70,468.92 60.59,472.04 61.98,466.21 57.43,462.31 63.40,461.83" fill="#8cbce8" stroke="#2f6ec0" stroke-width="1.2" stroke-linejoin="round"/><polygon points="65.70,480.30 68.00,485.83 73.97,486.31 69.42,490.21 70.81,496.04 65.70,492.92 60.59,496.04 61.98,490.21 57.43,486.31 63.40,485.83" fill="#8cc8b4" stroke="#2a8a68" stroke-width="1.2" stroke-linejoin="round"/><polygon points="65.70,504.30 68.00,509.83 73.97,510.31 69.42,514.21 70.81,520.04 65.70,516.91 60.59,520.04 61.98,514.21 57.43,510.31 63.40,509.83" fill="#8cc8b4" stroke="#2a8a68" stroke-width="1.2" stroke-linejoin="round"/><polygon points="65.70,633.30 68.00,638.83 73.97,639.31 69.42,643.21 70.81,649.04 65.70,645.91 60.59,649.04 61.98,643.21 57.43,639.31 63.40,638.83" fill="#8cbce8" stroke="#2f6ec0" stroke-width="1.2" stroke-linejoin="round"/><circle cx="65.5" cy="662" r="4.3" fill="#d8acc4" stroke="#d07898" stroke-width="1.1"/><path d="M57.2 676 V674 A8.3 7 0 0 1 73.8 674 V676 Z" fill="#d8acc4" stroke="#d07898" stroke-width="1.1"/><circle cx="65.5" cy="686" r="4.3" fill="#cfc6a0" stroke="#c0a070" stroke-width="1.1"/><path d="M57.2 700 V698 A8.3 7 0 0 1 73.8 698 V700 Z" fill="#cfc6a0" stroke="#c0a070" stroke-width="1.1"/><polygon points="65.70,705.30 68.00,710.83 73.97,711.31 69.42,715.21 70.81,721.04 65.70,717.91 60.59,721.04 61.98,715.21 57.43,711.31 63.40,710.83" fill="#8cc8b4" stroke="#2a8a68" stroke-width="1.2" stroke-linejoin="round"/></svg>
<div style="position:absolute;left:49px;top:354px;width:27px;height:180px;border:2.5px solid #173d60;box-sizing:border-box;"></div>
<div style="position:absolute;left:49px;top:606px;width:27px;height:117px;border:2.5px solid #173d60;box-sizing:border-box;"></div>
<div style="position:absolute;left:916px;top:395.5px;width:307px;height:378px;background:#f8f8f8;border:1px solid #1e6fd6;box-sizing:border-box;"></div>
<div style="position:absolute;left:916px;top:395.5px;width:307px;height:36px;background:#2b579a;border-top:1px solid #1e6fd6;border-left:1px solid #1e6fd6;border-right:1px solid #1e6fd6;box-sizing:border-box;"></div>
<div class="t " style="left:930.5px;top:409.8px;font-size:12.8px;line-height:16px;color:#fff;font-weight:normal;">Hours history (PRIM038)</div>
<svg style="position:absolute;left:1189.5px;top:404px;" width="10" height="10" viewBox="0 0 10 10"><path d="M0.5 0.5 L9.5 9.5 M9.5 0.5 L0.5 9.5" stroke="#fff" stroke-width="1.2"/></svg>
<div class="t " style="left:938.5px;top:447.0px;font-size:17.5px;line-height:22px;color:#333;font-weight:bold;">France Roy</div>
<div class="t " style="left:938.5px;top:471.7px;font-size:15px;line-height:19px;color:#4a4a4a;font-weight:normal;">Without department</div>
<div class="t " style="left:938.5px;top:513.6px;font-size:13px;line-height:16px;color:#555;font-weight:bold;">Applicant</div>
<div style="position:absolute;left:1004px;top:521px;width:198px;height:1.3px;background:#808080;"></div>
<div class="t " style="right:171.5px;top:535.1px;font-size:12px;line-height:15px;color:#444;font-weight:normal;">Since PRIM</div>
<div style="position:absolute;left:1107.5px;top:532.5px;width:85px;height:25.5px;background:#efefef;border:1.5px solid #5a8ad0;border-radius:4px;box-sizing:border-box;box-shadow:0 0 0 1px #cfe0f5;"></div>
<div style="position:absolute;left:1153px;top:537.5px;width:33.5px;height:13px;background:#1e5fd6;"></div>
<div class="t " style="right:86.5px;top:536.5px;font-size:12px;line-height:15px;color:#fff;font-weight:normal;">07:30</div>
<div style="position:absolute;left:1186.5px;top:537px;width:1px;height:14px;background:#222;"></div>
<div class="t " style="right:171.5px;top:568.8px;font-size:12px;line-height:15px;color:#444;font-weight:normal;">History</div>
<div style="position:absolute;left:1107.5px;top:565.5px;width:85px;height:26px;background:#fff;border:1px solid #d0d0d0;border-radius:4px;box-sizing:border-box;"></div>
<div class="t " style="right:86.5px;top:570.0px;font-size:12px;line-height:15px;color:#333;font-weight:normal;">00:00</div>
<div class="t " style="left:938.5px;top:601.0px;font-size:13px;line-height:16px;color:#555;font-weight:bold;">Recipient</div>
<div style="position:absolute;left:1004px;top:608.5px;width:198px;height:1.3px;background:#808080;"></div>
<div class="t " style="right:171.5px;top:626.4px;font-size:12px;line-height:15px;color:#444;font-weight:normal;">Since PRIM</div>
<div style="position:absolute;left:1107.5px;top:623px;width:85px;height:25.5px;background:#efefef;border:1px solid #d0d0d0;border-radius:4px;box-sizing:border-box;"></div>
<div class="t " style="right:86.5px;top:627.5px;font-size:12px;line-height:15px;color:#999;font-weight:normal;">07:30</div>
<div class="t " style="right:171.5px;top:660.0px;font-size:12px;line-height:15px;color:#444;font-weight:normal;">History</div>
<div style="position:absolute;left:1107.5px;top:657.3px;width:85px;height:25.7px;background:#fff;border:1px solid #d0d0d0;border-radius:4px;box-sizing:border-box;"></div>
<div class="t " style="right:86.5px;top:661.0px;font-size:12px;line-height:15px;color:#333;font-weight:normal;">00:00</div>
<div style="position:absolute;left:938.5px;top:707px;width:122px;height:44px;background:#fafafa;border:1px solid #d0d0d0;border-radius:4px;box-sizing:border-box;"></div>
<div class="t " style="left:949.0px;width:100px;text-align:center;top:721.5px;font-size:12.5px;line-height:16px;color:#444;font-weight:normal;">Close</div>
<div style="position:absolute;left:1079px;top:707px;width:122px;height:44px;background:#fafafa;border:1px solid #d8d8d8;border-radius:4px;box-sizing:border-box;"></div>
<div class="t " style="left:1090.0px;width:100px;text-align:center;top:721.5px;font-size:12.5px;line-height:16px;color:#aaa;font-weight:normal;">Save</div>
<svg style="position:absolute;left:0px;top:0px;" width="1" height="1" viewBox="0 0 1 1"><line x1="407.40" y1="307.56" x2="717.10" y2="309.74" stroke="#000" stroke-width="3.3"/><polygon points="725.50,309.80 714.96,315.23 715.04,304.23" fill="#000"/><polygon points="399.00,307.50 409.46,313.07 409.54,302.07" fill="#000"/><line x1="741.90" y1="308.54" x2="1062.40" y2="309.96" stroke="#000" stroke-width="3.3"/><polygon points="1070.80,310.00 1060.28,315.45 1060.32,304.45" fill="#000"/><polygon points="733.50,308.50 743.98,314.05 744.02,303.05" fill="#000"/><line x1="494.90" y1="583.02" x2="888.60" y2="583.78" stroke="#000" stroke-width="3.3"/><polygon points="897.00,583.80 886.49,589.28 886.51,578.28" fill="#000"/><polygon points="486.50,583.00 496.99,588.52 497.01,577.52" fill="#000"/><line x1="340.00" y1="643.40" x2="886.17" y2="714.32" stroke="#000" stroke-width="3.3"/><polygon points="894.50,715.40 883.38,719.50 884.80,708.59" fill="#000"/></svg>
<svg style="position:absolute;left:51px;top:276px;" width="56" height="56" viewBox="0 0 56 56"><circle cx="28" cy="28" r="25.5" fill="#3d8fb3" stroke="#1b3c5d" stroke-width="3.2"/></svg>
<div class="t " style="left:59.0px;width:40px;text-align:center;top:286.3px;font-size:30px;line-height:39px;color:#fff;font-weight:bold;">1</div>
<svg style="position:absolute;left:471.2px;top:297px;" width="56" height="56" viewBox="0 0 56 56"><circle cx="28" cy="28" r="25.5" fill="#3d8fb3" stroke="#1b3c5d" stroke-width="3.2"/></svg>
<div class="t " style="left:479.2px;width:40px;text-align:center;top:307.3px;font-size:30px;line-height:39px;color:#fff;font-weight:bold;">4</div>
<svg style="position:absolute;left:879.2px;top:297.5px;" width="56" height="56" viewBox="0 0 56 56"><circle cx="28" cy="28" r="25.5" fill="#3d8fb3" stroke="#1b3c5d" stroke-width="3.2"/></svg>
<div class="t " style="left:887.2px;width:40px;text-align:center;top:307.8px;font-size:30px;line-height:39px;color:#fff;font-weight:bold;">2</div>
<svg style="position:absolute;left:-0.6000000000000014px;top:419.5px;" width="56" height="56" viewBox="0 0 56 56"><circle cx="28" cy="28" r="25.5" fill="#3d8fb3" stroke="#1b3c5d" stroke-width="3.2"/></svg>
<div class="t " style="left:7.399999999999999px;width:40px;text-align:center;top:429.8px;font-size:30px;line-height:39px;color:#fff;font-weight:bold;">6</div>
<svg style="position:absolute;left:670px;top:569.2px;" width="56" height="56" viewBox="0 0 56 56"><circle cx="28" cy="28" r="25.5" fill="#3d8fb3" stroke="#1b3c5d" stroke-width="3.2"/></svg>
<div class="t " style="left:678.0px;width:40px;text-align:center;top:579.5px;font-size:30px;line-height:39px;color:#fff;font-weight:bold;">3</div>
<svg style="position:absolute;left:-1px;top:629px;" width="56" height="56" viewBox="0 0 56 56"><circle cx="28" cy="28" r="25.5" fill="#3d8fb3" stroke="#1b3c5d" stroke-width="3.2"/></svg>
<div class="t " style="left:7.0px;width:40px;text-align:center;top:639.3px;font-size:30px;line-height:39px;color:#fff;font-weight:bold;">7</div>
<svg style="position:absolute;left:216.4px;top:640.9px;" width="56" height="56" viewBox="0 0 56 56"><circle cx="28" cy="28" r="25.5" fill="#3d8fb3" stroke="#1b3c5d" stroke-width="3.2"/></svg>
<div class="t " style="left:224.4px;width:40px;text-align:center;top:651.1999999999999px;font-size:30px;line-height:39px;color:#fff;font-weight:bold;">5</div>
<svg style="position:absolute;left:892.5px;top:684.4px;" width="56" height="56" viewBox="0 0 56 56"><circle cx="28" cy="28" r="25.5" fill="#3d8fb3" stroke="#1b3c5d" stroke-width="3.2"/></svg>
<div class="t " style="left:900.5px;width:40px;text-align:center;top:694.6999999999999px;font-size:30px;line-height:39px;color:#fff;font-weight:bold;">8</div>
</body></html>
